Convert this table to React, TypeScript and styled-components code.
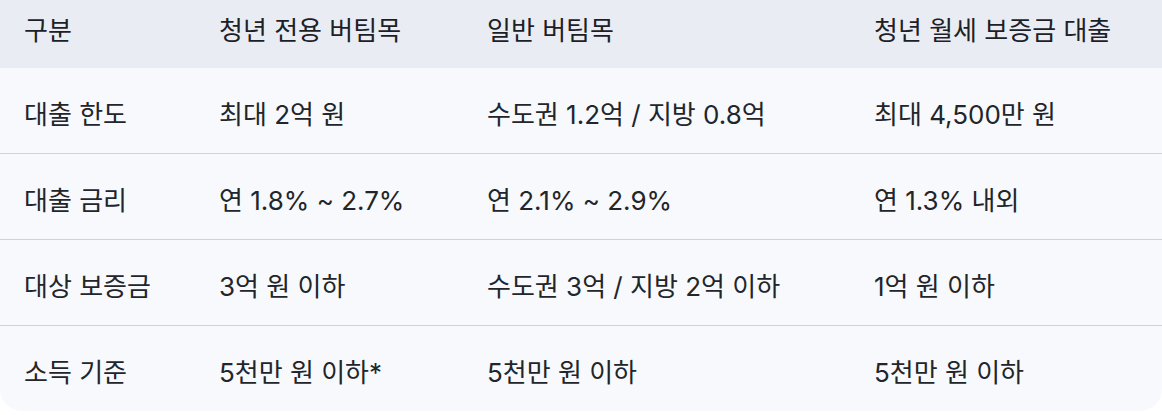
import React from "react";
import styled, { createGlobalStyle } from "styled-components";

const Global = createGlobalStyle`
  html, body { margin: 0; padding: 0; background: #ffffff; }
  body { font-family: "Inter", "Noto Sans CJK KR", sans-serif; }
`;

const Table = styled.div`
  width: 1162px;
  height: 411px;
  display: grid;
  grid-template-columns: 195px 268px 387px 1fr;
  grid-template-rows: 68px 86px 86px 86px 1fr;
  background: #f7f9fc;
  border-radius: 0 0 22px 22px;
  overflow: hidden;
  font-family: "Inter", "Noto Sans CJK KR", sans-serif;
`;

const Cell = styled.div<{ $head?: boolean; $last?: boolean }>`
  display: flex;
  align-items: center;
  padding-left: 24px;
  font-size: 26px;
  line-height: 1;
  color: ${(p) => (p.$head ? "#1d2127" : "#22252a")};
  background: ${(p) => (p.$head ? "#e9edf3" : "transparent")};
  border-bottom: ${(p) => (p.$head || p.$last ? "none" : "1px solid #cfd2d6")};
  padding-top: ${(p) => (p.$head ? "0" : "8px")};
  padding-bottom: ${(p) => (p.$head ? "6px" : "0")};
  white-space: nowrap;
`;

const head = ["구분", "청년 전용 버팀목", "일반 버팀목", "청년 월세 보증금 대출"];
const rows = [
  ["대출 한도", "최대 2억 원", "수도권 1.2억 / 지방 0.8억", "최대 4,500만 원"],
  ["대출 금리", "연 1.8% ~ 2.7%", "연 2.1% ~ 2.9%", "연 1.3% 내외"],
  ["대상 보증금", "3억 원 이하", "수도권 3억 / 지방 2억 이하", "1억 원 이하"],
  ["소득 기준", "5천만 원 이하*", "5천만 원 이하", "5천만 원 이하"],
];

export default function App() {
  return (
    <>
      <Global />
      <Table>
        {head.map((h) => (
          <Cell key={h} $head>
            {h}
          </Cell>
        ))}
        {rows.map((r, i) =>
          r.map((c, j) => (
            <Cell key={`${i}-${j}`} $last={i === rows.length - 1}>
              {c}
            </Cell>
          ))
        )}
      </Table>
    </>
  );
}
